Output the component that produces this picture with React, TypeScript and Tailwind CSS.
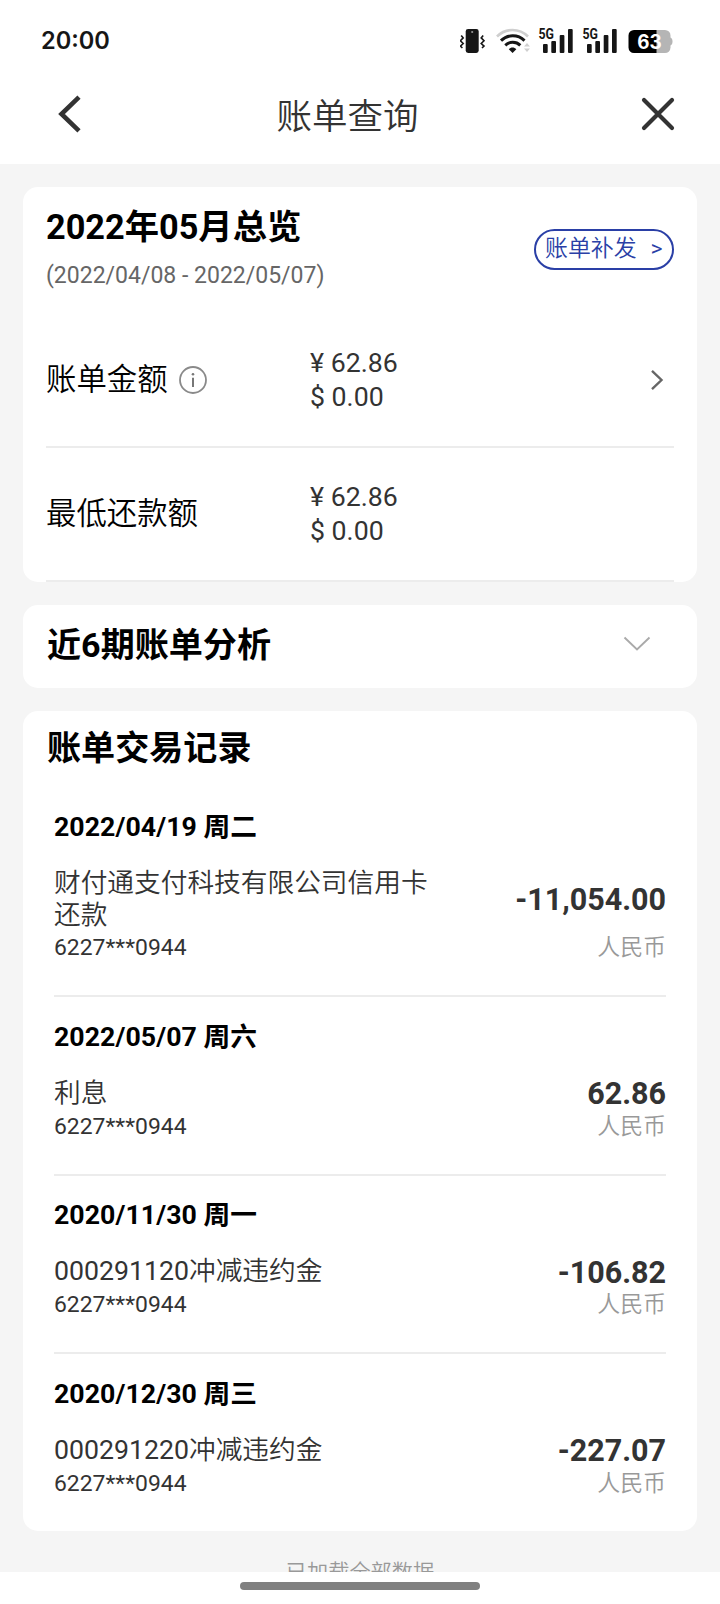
const overview = [
  { label: '账单金额', cny: '¥ 62.86', usd: '$ 0.00', info: true, arrow: true },
  { label: '最低还款额', cny: '¥ 62.86', usd: '$ 0.00', info: false, arrow: false },
];

const records = [
  {
    date: '2022/04/19 周二',
    code: '',
    title: '财付通支付科技有限公司信用卡还款',
    card: '6227***0944',
    amount: '-11,054.00',
    currency: '人民币',
  },
  {
    date: '2022/05/07 周六',
    code: '',
    title: '利息',
    card: '6227***0944',
    amount: '62.86',
    currency: '人民币',
  },
  {
    date: '2020/11/30 周一',
    code: '000291120',
    title: '冲减违约金',
    card: '6227***0944',
    amount: '-106.82',
    currency: '人民币',
  },
  {
    date: '2020/12/30 周三',
    code: '000291220',
    title: '冲减违约金',
    card: '6227***0944',
    amount: '-227.07',
    currency: '人民币',
  },
];

function Signal() {
  return (
    <svg width="36" height="28" viewBox="0 0 36 28" className="shrink-0" fill="#161616">
      <text
        x="0.5"
        y="12.5"
        fontSize="14.5"
        fontWeight="700"
        textLength="15.5"
        lengthAdjust="spacingAndGlyphs"
        className="font-['Roboto',sans-serif]"
      >
        5G
      </text>
      <rect x="5" y="18" width="4.7" height="9" rx="1" />
      <rect x="13.3" y="15" width="4.7" height="12" rx="1" />
      <rect x="21.7" y="9" width="4.7" height="18" rx="1" />
      <rect x="30" y="3" width="4.7" height="24" rx="1" />
    </svg>
  );
}

function StatusBar() {
  return (
    <div className="flex h-[82px] items-center justify-between pl-[41px] pr-[47px]">
      <span className="font-['Inter',sans-serif] text-[23.6px] font-semibold leading-none text-[#161616]">
        20:00
      </span>
      <div className="flex items-center pb-[2px]">
        {/* Vibrate */}
        <svg width="26" height="28" viewBox="0 0 26 28" fill="none" className="mr-[10px]">
          <rect x="5.7" y="3" width="13" height="24" rx="2.4" fill="#161616" />
          <circle cx="12.2" cy="6" r="1.1" fill="#999" />
          <path
            d="M1.2 9.5l2 2.4-2.8 2.8 2.8 2.8-2.8 2.6 2 1.9M23.2 9.5l-2 2.4 2.8 2.8-2.8 2.8 2.8 2.6-2 1.9"
            stroke="#161616"
            strokeWidth="1.6"
          />
        </svg>
        {/* Wifi */}
        <svg width="34" height="28" viewBox="0 0 34 28" fill="none" className="mr-[8px]">
          <path d="M1 10.5C9.5 1.8 23.5 1.8 32 10.5" stroke="#cfcfcf" strokeWidth="2.6" />
          <path d="M5 14.6c6.5-6.4 17-6.4 23.5 0" stroke="#161616" strokeWidth="3" />
          <path d="M9.3 19.3c4.2-4 10.8-4 15 0" stroke="#161616" strokeWidth="3" />
          <path d="M12.8 23.2c2-2.2 5.5-2.2 7.5 0L16.6 27z" fill="#161616" />
          <path d="M28 20.5l3-3.5 3 3.5zM28 22.5l3 3.5 3-3.5z" fill="#cfcfcf" />
        </svg>
        <Signal />
        <div className="w-2" />
        <Signal />
        {/* Battery */}
        <svg width="45" height="28" viewBox="0 0 45 28" className="ml-[10px]">
          <path d="M28 4h9a5.5 5.5 0 0 1 5.5 5.5v12A5.5 5.5 0 0 1 37 27h-9z" fill="#b5b5b5" />
          <path d="M42 11.5c2 .6 2.5 2 2.5 4s-.5 3.4-2.5 4z" fill="#b5b5b5" />
          <path d="M28.5 4H6A5.5 5.5 0 0 0 .5 9.5v12A5.5 5.5 0 0 0 6 27h22.5z" fill="#000" />
          <text
            x="9.3"
            y="22.6"
            fontSize="19.5"
            fontWeight="700"
            fill="#fff"
            textLength="24.5"
            lengthAdjust="spacingAndGlyphs"
            className="font-['Inter',sans-serif]"
          >
            63
          </text>
        </svg>
      </div>
    </div>
  );
}

function NavBar() {
  return (
    <div className="flex h-[82px] items-start justify-between pl-[58px] pr-[45px]">
      <svg width="24" height="38" viewBox="0 0 24 38" fill="none" className="mt-[13px]">
        <path d="M21 2.2L3.5 19 21 35.8" stroke="#333" strokeWidth="4.6" />
      </svg>
      <h1 className="mr-[28px] mt-[10px] text-[35.5px] font-[350] leading-[50px] text-[#333]">账单查询</h1>
      <svg width="34" height="34" viewBox="0 0 34 34" fill="none" className="mt-[15px]">
        <path d="M3 3l28 28M31 3L3 31" stroke="#333" strokeWidth="4.2" strokeLinecap="round" />
      </svg>
    </div>
  );
}

export default function App() {
  return (
    <div className="flex h-[1604px] w-[720px] flex-col overflow-hidden bg-white font-['Roboto','Noto_Sans_CJK_SC',sans-serif]">
      <StatusBar />
      <NavBar />

      <main className="flex h-[1408px] flex-col overflow-hidden bg-[#f5f5f5] px-[23px] pt-[23px]">
        {/* Overview */}
        <section className="shrink-0 rounded-[15px] bg-white px-[23px]">
          <div className="flex h-[127px] items-start justify-between">
            <div className="pt-[15px]">
              <h2 className="text-[34.3px] font-bold leading-[50px] text-black">2022年05月总览</h2>
              <p className="mt-[7px] text-[23px] leading-[33px] text-[#666]">(2022/04/08 - 2022/05/07)</p>
            </div>
            <button className="mt-[42px] flex h-[41px] w-[140px] items-center rounded-full border-2 border-[#2a3fa6] pl-[9px] text-[22.9px] font-[350] leading-none text-[#2a3fa6]">
              账单补发
              <span className="ml-[14px] font-normal">&gt;</span>
            </button>
          </div>
          {overview.map((row) => (
            <div key={row.label} className="flex h-[134px] items-center border-b-2 border-[#ececec]">
              <div className="flex w-[264px] items-center">
                <span className="text-[30.4px] font-[350] leading-[34px] text-black">{row.label}</span>
                {row.info && (
                  <svg width="28" height="28" viewBox="0 0 28 28" fill="none" className="ml-[11px]">
                    <circle cx="14" cy="14" r="13" stroke="#8a8a8a" strokeWidth="1.8" />
                    <path d="M14 11.8v9.2" stroke="#777" strokeWidth="2" />
                    <circle cx="14" cy="8.2" r="1.3" fill="#777" />
                  </svg>
                )}
              </div>
              <div className="flex-1 text-[26.7px] leading-[34px] text-[#333]">
                <p>{row.cny}</p>
                <p>{row.usd}</p>
              </div>
              {row.arrow && (
                <svg width="14" height="22" viewBox="0 0 14 22" fill="none" className="mr-[10px]">
                  <path d="M2 1.8L11.5 11 2 20.2" stroke="#666" strokeWidth="2.4" />
                </svg>
              )}
            </div>
          ))}
        </section>

        {/* Analysis */}
        <section className="mt-[23px] flex h-[83px] shrink-0 items-start justify-between rounded-[15px] bg-white pl-[24px] pr-[46px]">
          <h2 className="mt-[15px] text-[34.1px] font-bold leading-[50px] text-black">近6期账单分析</h2>
          <svg width="28" height="16" viewBox="0 0 28 16" fill="none" className="mt-[31px]">
            <path d="M1.5 1.5L14 13.5 26.5 1.5" stroke="#aaa" strokeWidth="1.9" />
          </svg>
        </section>

        {/* Records */}
        <section className="mt-[23px] h-[820px] shrink-0 rounded-[15px] bg-white">
          <h2 className="h-[76px] pl-[24px] pt-[12px] text-[34.1px] font-bold leading-[50px] text-black">
            账单交易记录
          </h2>
          <ul className="px-[31px]">
            {records.map((item) => (
              <li key={item.date} className="border-b-2 border-[#ececec] pb-[31.2px] pt-[23.5px] last:border-b-0">
                <p className="text-[26.7px] font-bold leading-[32px] tracking-[0.06px] text-black">{item.date}</p>
                <div className="mt-[24px] flex items-center justify-between">
                  <p className="w-[380px] text-[26.7px] leading-[32px] text-[#333]">
                    {item.code}
                    <span className="font-[350]">{item.title}</span>
                  </p>
                  <p className="pt-[3px] text-[30.5px] font-bold leading-[28px] text-[#333]">{item.amount}</p>
                </div>
                <div className="mt-[1.8px] flex justify-between text-[22.9px] leading-[32px]">
                  <span className="text-[#333]">{item.card}</span>
                  <span className="font-[350] text-[#999]">{item.currency}</span>
                </div>
              </li>
            ))}
          </ul>
        </section>

        <p className="mt-[26px] shrink-0 text-center text-[21.2px] font-[350] leading-[32px] text-[#999]">
          已加载全部数据
        </p>
      </main>

      <div className="flex flex-1 items-start justify-center pt-[10px]">
        <div className="h-2 w-60 rounded-full bg-[#808080]" />
      </div>
    </div>
  );
}
